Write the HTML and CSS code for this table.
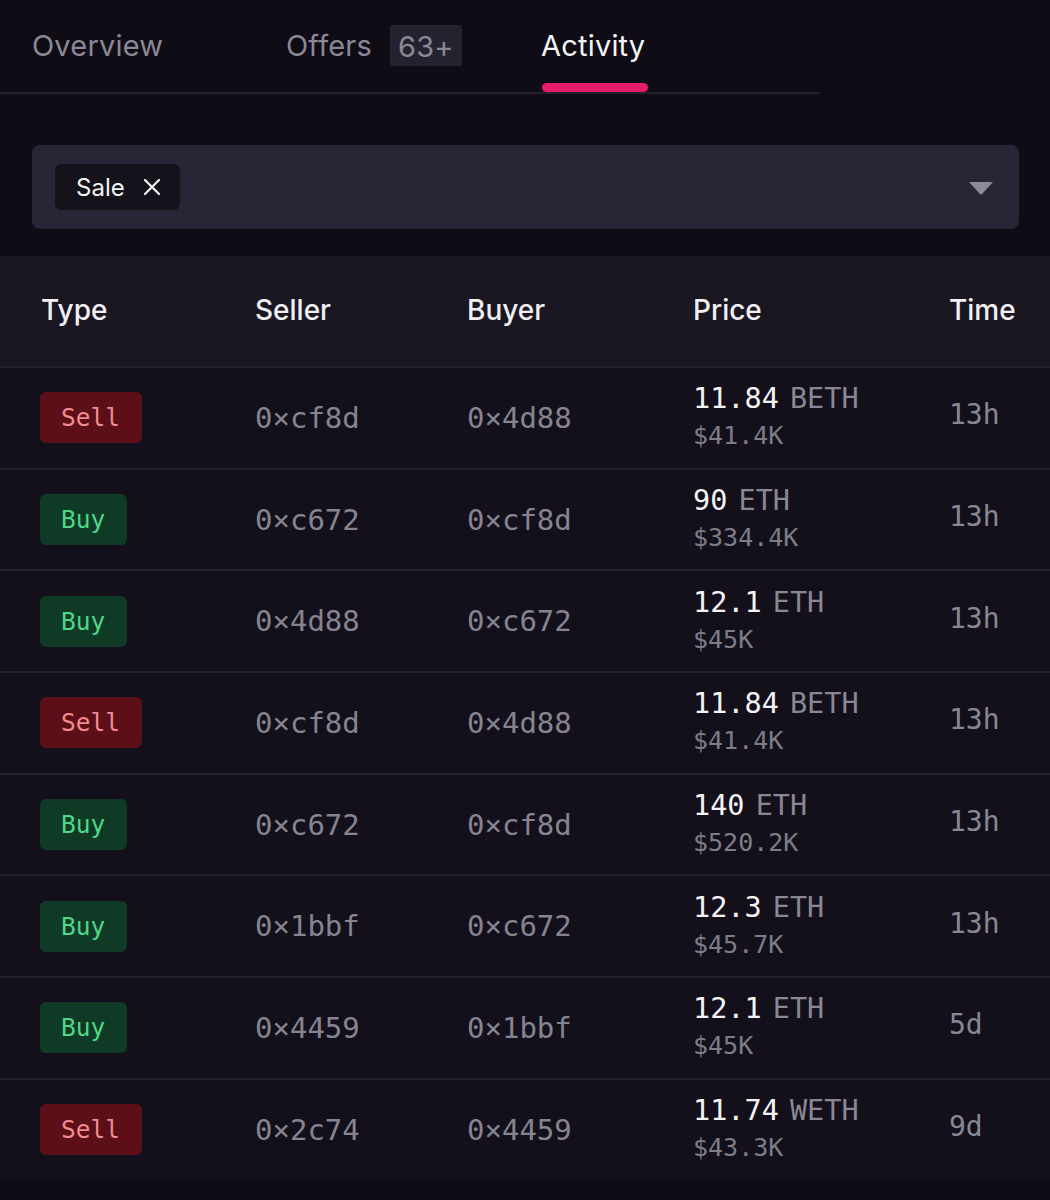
FILE: index.html
```html
<!DOCTYPE html>
<html>
<head>
<meta charset="utf-8">
<link rel="stylesheet" href="styles.css">
</head>
<body>
<div class="page">
  <nav class="tabs">
    <div class="tab tab-overview">Overview</div>
    <div class="tab tab-offers">Offers <span class="count">63+</span></div>
    <div class="tab tab-activity active">Activity</div>
  </nav>

  <div class="filter">
    <div class="chip"><span>Sale</span>
      <svg class="chip-x" width="18" height="18" viewBox="0 0 18 18"><path d="M2 2 L16 16 M16 2 L2 16" stroke="#f2f2f5" stroke-width="2.2" stroke-linecap="round"/></svg>
    </div>
    <svg class="caret" width="26" height="14" viewBox="0 0 26 14"><path d="M1 1 H25 L14 13 Q13 14 12 13 Z" fill="#8e8b99"/></svg>
  </div>

  <div class="table">
    <div class="row head">
      <div>Type</div><div>Seller</div><div>Buyer</div><div>Price</div><div>Time</div>
    </div>
    <div class="row">
      <div><span class="badge sell">Sell</span></div>
      <div class="addr">0×cf8d</div><div class="addr">0×4d88</div>
      <div class="price"><div class="amt"><b>11.84</b> BETH</div><div class="usd">$41.4K</div></div>
      <div class="time">13h</div>
    </div>
    <div class="row">
      <div><span class="badge buy">Buy</span></div>
      <div class="addr">0×c672</div><div class="addr">0×cf8d</div>
      <div class="price"><div class="amt"><b>90</b> ETH</div><div class="usd">$334.4K</div></div>
      <div class="time">13h</div>
    </div>
    <div class="row">
      <div><span class="badge buy">Buy</span></div>
      <div class="addr">0×4d88</div><div class="addr">0×c672</div>
      <div class="price"><div class="amt"><b>12.1</b> ETH</div><div class="usd">$45K</div></div>
      <div class="time">13h</div>
    </div>
    <div class="row">
      <div><span class="badge sell">Sell</span></div>
      <div class="addr">0×cf8d</div><div class="addr">0×4d88</div>
      <div class="price"><div class="amt"><b>11.84</b> BETH</div><div class="usd">$41.4K</div></div>
      <div class="time">13h</div>
    </div>
    <div class="row">
      <div><span class="badge buy">Buy</span></div>
      <div class="addr">0×c672</div><div class="addr">0×cf8d</div>
      <div class="price"><div class="amt"><b>140</b> ETH</div><div class="usd">$520.2K</div></div>
      <div class="time">13h</div>
    </div>
    <div class="row">
      <div><span class="badge buy">Buy</span></div>
      <div class="addr">0×1bbf</div><div class="addr">0×c672</div>
      <div class="price"><div class="amt"><b>12.3</b> ETH</div><div class="usd">$45.7K</div></div>
      <div class="time">13h</div>
    </div>
    <div class="row">
      <div><span class="badge buy">Buy</span></div>
      <div class="addr">0×4459</div><div class="addr">0×1bbf</div>
      <div class="price"><div class="amt"><b>12.1</b> ETH</div><div class="usd">$45K</div></div>
      <div class="time">5d</div>
    </div>
    <div class="row">
      <div><span class="badge sell">Sell</span></div>
      <div class="addr">0×2c74</div><div class="addr">0×4459</div>
      <div class="price"><div class="amt"><b>11.74</b> WETH</div><div class="usd">$43.3K</div></div>
      <div class="time">9d</div>
    </div>
  </div>
</div>
</body>
</html>
```

FILE: styles.css
```css
html, body {
  margin: 0;
  padding: 0;
  background: #0f0c16;
}
.page {
  width: 1050px;
  height: 1200px;
  overflow: hidden;
  background: #0f0c16;
  font-family: Inter, "Noto Sans", sans-serif;
}
.tabs {
  display: flex;
  align-items: flex-start;
  width: 820px;
  height: 92px;
  border-bottom: 2px solid #24212c;
  box-sizing: content-box;
}
.tab {
  position: relative;
  font-size: 29px;
  line-height: 34px;
  color: #8b8895;
  padding-top: 29px;
  height: 63px;
  display: flex;
  align-items: flex-start;
  letter-spacing: 0.2px;
}
.tab-overview { margin-left: 32px; width: 254px; }
.tab-offers { width: 255px; }
.count {
  display: inline-block;
  margin-left: 18px;
  margin-top: -4px;
  padding: 0 8px;
  height: 41px;
  line-height: 43px;
  background: #25222f;
  border-radius: 3px;
  color: #8b8895;
}
.tab-activity { color: #f4f4f7; }
.tab-activity::after {
  content: "";
  position: absolute;
  left: 1px;
  right: -3px;
  bottom: 0;
  height: 9px;
  border-radius: 5px;
  background: #e61b69;
}
.filter {
  margin: 51px 31px 0 32px;
  height: 84px;
  background: #2a2536;
  border-radius: 8px;
  display: flex;
  align-items: center;
  justify-content: space-between;
  padding: 0 25px 0 23px;
}
.chip {
  display: flex;
  align-items: center;
  height: 46px;
  padding: 0 19px 0 21px;
  background: #15121c;
  border-radius: 6px;
  color: #f2f2f5;
  font-size: 24px;
  gap: 18px;
}
.chip-x { display: block; }
.caret { display: block; margin-top: 2px; }
.table {
  margin-top: 27px;
  background: #13101b;
}
.row {
  display: grid;
  grid-template-columns: 215px 212px 226px 256px 1fr;
  padding-left: 40px;
  height: 101.7px;
  align-items: center;
  border-top: 2px solid #25222d;
  box-sizing: border-box;
}
.row.head {
  height: 110px;
  border-top: none;
  background: #1a1723;
  font-size: 28px;
  font-weight: 500;
  color: #f0f0f4;
  padding-bottom: 3px;
}
.row.head > div:first-child { padding-left: 1px; }
.badge {
  display: inline-block;
  height: 51px;
  line-height: 51px;
  padding: 0 22px 0 21px;
  border-radius: 6px;
  font-family: "DejaVu Sans Mono", monospace;
  font-size: 24.5px;
}
.badge.sell { background: #5c0f17; color: #f08b8f; }
.badge.buy { background: #0f3a26; color: #4fd789; }
.addr {
  font-family: "DejaVu Sans Mono", monospace;
  font-size: 29px;
  color: #878491;
}
.price {
  font-family: "DejaVu Sans Mono", monospace;
  display: flex;
  flex-direction: column;
  gap: 7px;
  margin-top: -2px;
}
.amt {
  font-size: 28.5px;
  color: #8a8794;
  line-height: 32px;
  word-spacing: -6px;
}
.amt b { font-weight: 500; color: #f4f4f7; }
.usd {
  font-size: 25px;
  color: #7f7c89;
  line-height: 28px;
}
.time {
  font-family: "DejaVu Sans Mono", monospace;
  font-size: 28px;
  color: #8a8794;
  margin-top: -6px;
}
```
